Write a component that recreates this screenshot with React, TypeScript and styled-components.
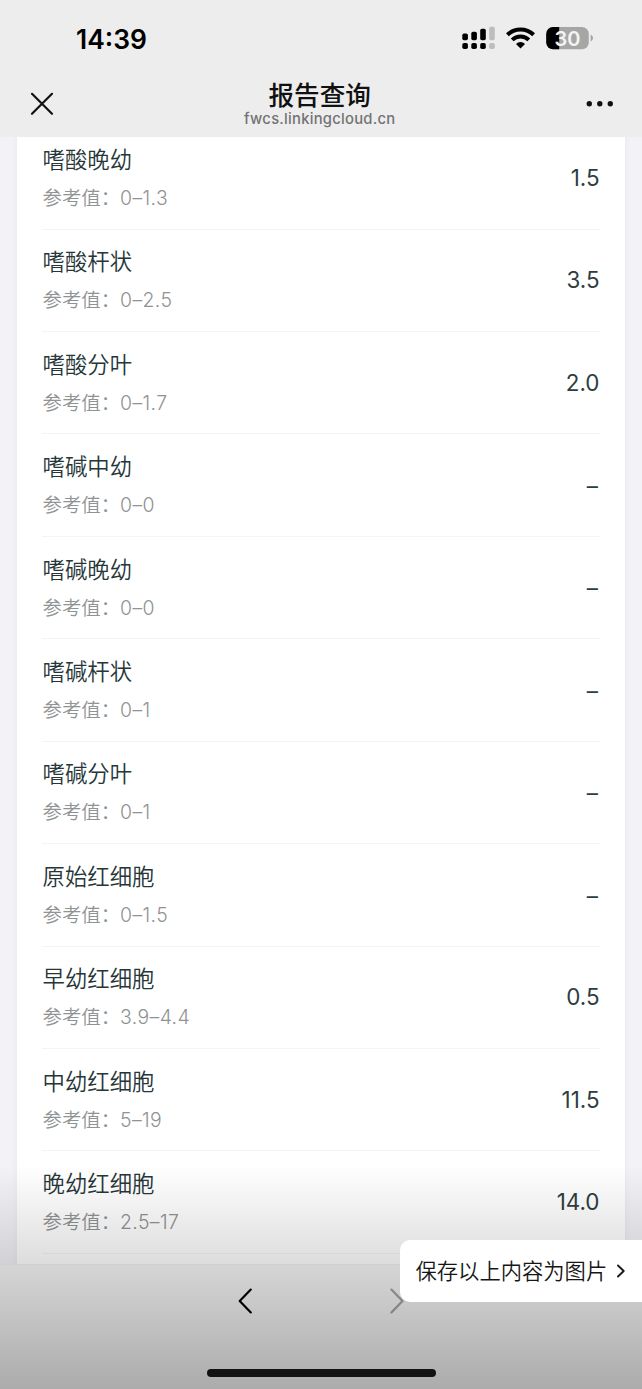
import React from 'react';
import styled, { createGlobalStyle } from 'styled-components';

const GlobalStyle = createGlobalStyle`
  * { box-sizing: border-box; }
  html, body { margin: 0; padding: 0; overflow: hidden; }
  body {
    font-family: Inter, "Noto Sans CJK SC", sans-serif;
    background: #f2f2f7;
  }
`;

const Screen = styled.main`
  position: relative;
  width: 642px;
  height: 1389px;
  display: flex;
  flex-direction: column;
  overflow: hidden;
  background: #f2f2f7;
`;

const Header = styled.header`
  flex: none;
  height: 136.5px;
  background: #ededed;
  z-index: 1;
`;

const StatusBar = styled.div`
  height: 76px;
  padding: 0 48px 0 76px;
  display: flex;
  justify-content: space-between;
  align-items: center;
`;

const Clock = styled.div`
  padding-top: 2px;
  font-size: 26.4px;
  font-weight: 600;
  line-height: 30px;
  color: #000;
`;

const StatusIcons = styled.svg`
  display: block;
  width: 132px;
  height: 28px;
`;

const NavBar = styled.div`
  height: 60px;
  padding: 0 28px;
  display: grid;
  grid-template-columns: 60px 1fr 60px;
  align-items: start;
`;

const NavIcon = styled.svg<{ $end?: boolean }>`
  display: block;
  width: 28px;
  height: 28px;
  margin-top: 14px;
  justify-self: ${p => (p.$end ? 'end' : 'start')};
`;

const Titles = styled.div`
  text-align: center;
  padding: 3px 2.6px 0 0;
`;

const Title = styled.h1`
  margin: 0;
  font-size: 25.6px;
  font-weight: 500;
  line-height: 34px;
  color: #111;
`;

const Host = styled.div`
  font-size: 14.8px;
  font-weight: 500;
  line-height: 16px;
  margin-top: -2.5px;
  letter-spacing: 0.25px;
  color: #737373;
`;

const Content = styled.section`
  flex: 1;
  min-height: 0;
  padding: 0 17px;
  overflow: hidden;
`;

const Card = styled.ul`
  margin: -9.4px 0 0;
  padding: 0 25.5px 0 25px;
  height: 1200px;
  list-style: none;
  background: #fff;
  box-shadow: 0 0 8px rgba(0, 0, 0, 0.05);
`;

const Row = styled.li`
  height: 102.45px;
  display: flex;
  justify-content: space-between;
  align-items: center;
  border-bottom: 1px solid #f4f4f5;
`;

const Name = styled.div`
  padding-left: 0.5px;
  font-size: 22.4px;
  font-weight: 350;
  line-height: 32px;
  color: #263638;
`;

const Range = styled.div`
  margin-top: 8px;
  padding-left: 0.5px;
  font-size: 19.4px;
  font-weight: 350;
  line-height: 28px;
  color: #8f9393;
`;

const RangeValue = styled.span`
  letter-spacing: 0.4px;
`;

const Value = styled.div<{ $empty: boolean }>`
  padding: ${p => (p.$empty ? '1.5px 1.5px 0 0' : '0')};
  font-size: 22.4px;
  font-weight: 400;
  line-height: 30px;
  color: #2e3d3f;
`;

const BottomBar = styled.footer`
  flex: none;
  height: 125px;
  padding-top: 21px;
  display: flex;
  flex-direction: column;
  align-items: center;
  background: #f7f7f7;
  border-top: 1px solid #efefef;
`;

const Pager = styled.div`
  width: 170px;
  display: flex;
  justify-content: space-between;
`;

const Chevron = styled.svg`
  display: block;
  width: 18px;
  height: 30px;
`;

const HomeIndicator = styled.div`
  width: 229px;
  height: 8px;
  margin-top: 53px;
  border-radius: 4px;
  background: #191919;
`;

const Shade = styled.div`
  position: absolute;
  left: 0;
  right: 0;
  bottom: 0;
  height: 224px;
  background: linear-gradient(rgba(0, 0, 0, 0), rgba(0, 0, 0, 0.305));
  pointer-events: none;
`;

const SaveButton = styled.button`
  position: absolute;
  right: 0;
  top: 1240px;
  width: 242px;
  height: 62px;
  border: 0;
  border-radius: 10px 0 0 10px;
  padding: 0 15px 0 15.5px;
  display: flex;
  align-items: center;
  justify-content: space-between;
  background: #fff;
  font-family: inherit;
  font-size: 21.3px;
  font-weight: 350;
  line-height: 30px;
  color: #161616;
  white-space: nowrap;
`;

const SaveArrow = styled.svg`
  display: block;
  width: 12px;
  height: 16px;
`;

const results = [
  { name: '嗜酸晚幼', range: '0–1.3', value: '1.5' },
  { name: '嗜酸杆状', range: '0–2.5', value: '3.5' },
  { name: '嗜酸分叶', range: '0–1.7', value: '2.0' },
  { name: '嗜碱中幼', range: '0–0', value: '–' },
  { name: '嗜碱晚幼', range: '0–0', value: '–' },
  { name: '嗜碱杆状', range: '0–1', value: '–' },
  { name: '嗜碱分叶', range: '0–1', value: '–' },
  { name: '原始红细胞', range: '0–1.5', value: '–' },
  { name: '早幼红细胞', range: '3.9–4.4', value: '0.5' },
  { name: '中幼红细胞', range: '5–19', value: '11.5' },
  { name: '晚幼红细胞', range: '2.5–17', value: '14.0' },
];

function DeviceStatus() {
  return (
    <StatusIcons viewBox="0 0 132 28">
      <g fill="#000">
        <rect x="0.3" y="9.5" width="5.6" height="6.8" rx="1.7" />
        <rect x="9.3" y="7.8" width="5.6" height="8.5" rx="1.7" />
        <rect x="18.2" y="4.8" width="5.6" height="11.5" rx="1.7" />
        <rect x="0.3" y="19" width="5.6" height="6" rx="1.8" />
        <rect x="9.3" y="19" width="5.6" height="6" rx="1.8" />
        <rect x="18.2" y="19" width="5.6" height="6" rx="1.8" />
      </g>
      <g fill="#bdbdbd">
        <rect x="27.2" y="2.8" width="5.6" height="13.5" rx="1.7" />
        <rect x="27.2" y="19" width="5.6" height="6" rx="1.8" />
      </g>
      <g fill="none" stroke="#000" strokeWidth="4">
        <path d="M45.4 10.8a18.8 18.8 0 0 1 26.2 0" />
        <path d="M50.2 15.9a12 12 0 0 1 16.6 0" />
      </g>
      <path d="M58.5 24.4l-4.5-4.5a6.4 6.4 0 0 1 9 0z" fill="#000" />
      <clipPath id="battery">
        <rect x="84.2" y="3" width="42.6" height="22.2" rx="6.8" />
      </clipPath>
      <g clipPath="url(#battery)">
        <rect x="84" y="3" width="43" height="23" fill="#a6a6a6" />
        <rect x="84" y="3" width="13.2" height="23" fill="#000" />
      </g>
      <path d="M128.6 10.8c3.2 1 3.2 5.6 0 6.6z" fill="#a6a6a6" />
      <text
        x="105.5"
        y="21.5"
        textAnchor="middle"
        fontFamily="Inter, sans-serif"
        fontSize="20"
        fontWeight="600"
        fill="#f4f4f4"
      >
        30
      </text>
    </StatusIcons>
  );
}

export default function App() {
  return (
    <>
      <GlobalStyle />
      <Screen>
        <Header>
          <StatusBar>
            <Clock>14:39</Clock>
            <DeviceStatus />
          </StatusBar>
          <NavBar>
            <NavIcon viewBox="0 0 28 28">
              <path d="M4 3.8l20 20M24 3.8l-20 20" stroke="#111" strokeWidth="2.2" strokeLinecap="round" />
            </NavIcon>
            <Titles>
              <Title>报告查询</Title>
              <Host>fwcs.linkingcloud.cn</Host>
            </Titles>
            <NavIcon viewBox="0 0 28 28" $end>
              <g fill="#111">
                <circle cx="3.3" cy="13.8" r="2.7" />
                <circle cx="13.8" cy="13.8" r="2.7" />
                <circle cx="24.3" cy="13.8" r="2.7" />
              </g>
            </NavIcon>
          </NavBar>
        </Header>
        <Content>
          <Card>
            {results.map(r => (
              <Row key={r.name}>
                <div>
                  <Name>{r.name}</Name>
                  <Range>
                    参考值：<RangeValue>{r.range}</RangeValue>
                  </Range>
                </div>
                <Value $empty={r.value === '–'}>{r.value}</Value>
              </Row>
            ))}
          </Card>
        </Content>
        <BottomBar>
          <Pager>
            <Chevron viewBox="0 0 18 30">
              <path d="M14.8 3.6L3.7 15l11.1 11.4" fill="none" stroke="#000" strokeWidth="2.2" strokeLinecap="round" strokeLinejoin="round" />
            </Chevron>
            <Chevron viewBox="0 0 18 30">
              <path d="M3.4 3.6L14.5 15L3.4 26.4" fill="none" stroke="#a3a3a3" strokeWidth="2.2" strokeLinecap="round" strokeLinejoin="round" />
            </Chevron>
          </Pager>
          <HomeIndicator />
        </BottomBar>
        <Shade />
        <SaveButton>
          保存以上内容为图片
          <SaveArrow viewBox="0 0 12 16">
            <path d="M3 2.5L8.7 8L3 13.5" fill="none" stroke="#1a1a1a" strokeWidth="1.9" strokeLinecap="round" strokeLinejoin="round" />
          </SaveArrow>
        </SaveButton>
      </Screen>
    </>
  );
}
